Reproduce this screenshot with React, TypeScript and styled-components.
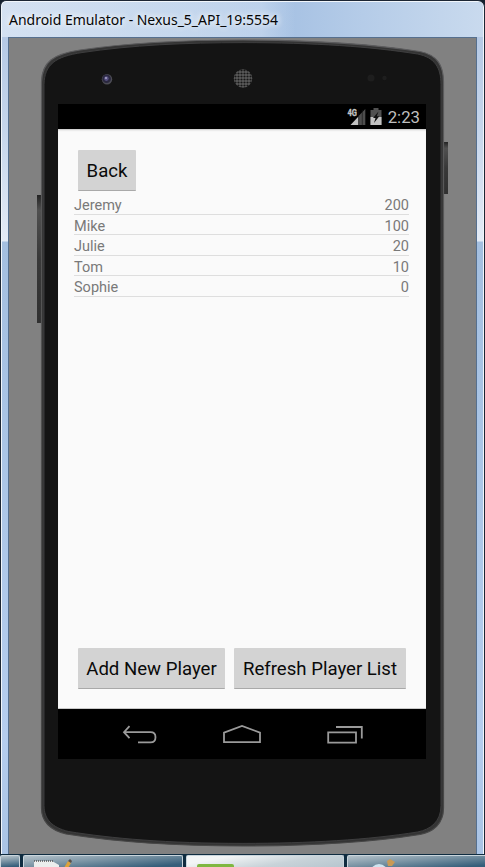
import React from 'react';
import styled, { createGlobalStyle } from 'styled-components';

const Global = createGlobalStyle`
  * { box-sizing: border-box; }
  body { margin: 0; background: #17202b; overflow: hidden; }
`;

const Desktop = styled.div`
  width: 485px;
  height: 867px;
  display: flex;
  flex-direction: column;
  overflow: hidden;
  background: #14202e;
`;

const Window = styled.div`
  height: 854px;
  border: 1px solid #1c2634;
  border-bottom: 0;
  border-radius: 6px 7px 0 0;
  display: flex;
  flex-direction: column;
  background: #bcd0e9;
  box-shadow: inset 1px 1px 0 #f1f6fb, inset -1px 0 0 #f1f6fb;
  flex: none;
`;

const TitleBar = styled.div`
  height: 35px;
  margin: 1px 1px 0;
  padding: 6px 0 0 7px;
  border-radius: 5px 5px 0 0;
  background:
    linear-gradient(90deg, rgba(225, 235, 247, 0.7) 0, rgba(215, 229, 245, 0.5) 54%, rgba(160, 190, 225, 0) 61%),
    linear-gradient(90deg, #b5cae5 0, #a3bfe2 55%, #b5cce8 75%, #c9daee 100%);
`;

const Title = styled.div`
  font: 14px/24px 'Noto Sans', 'Open Sans', sans-serif;
  letter-spacing: -0.02px;
  color: #060606;
  white-space: nowrap;
  text-shadow: 0 0 6px #fff, 0 0 8px rgba(255, 255, 255, 0.8);
`;

const WindowBody = styled.div`
  flex: 1;
  display: flex;
  padding: 0 7px 0 7px;
  background: linear-gradient(180deg, #b5c9e5 0, #c5d5eb 90px, #e4ebf6 204px, #a4bfe0 205px, #a9c4e5 380px, #b5cdee 700px, #a9c3e4 100%);
  margin: 0 1px;
`;

const Stage = styled.div`
  position: relative;
  flex: 1;
  margin: 0 -1px;
  border: 1px solid #56708f;
  border-bottom: 0;
  background: #818181;
  padding: 66px 0 0 49px;
`;

const Shell = styled.svg`
  position: absolute;
  left: -9px;
  top: -38px;
  width: 485px;
  height: 855px;
`;

const Screen = styled.div`
  position: relative;
  width: 368px;
  height: 655px;
  display: flex;
  flex-direction: column;
  background: #fafafa;
  font-family: Roboto, sans-serif;
`;

const StatusBar = styled.div`
  height: 25px;
  display: flex;
  align-items: center;
  justify-content: flex-end;
  gap: 3px;
  background: #000;
  padding: 0 6px 0 0;
  svg { flex: none; }
`;

const Clock = styled.span`
  font-size: 16.8px;
  line-height: 24px;
  color: #bfbfbf;
  margin-left: 3px;
`;

const Content = styled.div`
  flex: 1;
  display: flex;
  flex-direction: column;
  padding: 21px 16px 19px;
  border-bottom: 1px solid #c9c9c9;
  box-shadow: inset 0 2px 2px -1px #c4c4c4;
`;

const Button = styled.button<{ $w: number }>`
  width: ${(p) => p.$w}px;
  height: 41px;
  padding: 2px 0 0;
  border: 0;
  border-bottom: 1px solid #a9a9a9;
  border-radius: 1px;
  background: #d3d3d3;
  color: #0a0a0a;
  font: 18.6px/38px Roboto, sans-serif;
  white-space: nowrap;
`;

const TopActions = styled.div`
  display: flex;
  padding-left: 4px;
`;

const PlayerList = styled.ul`
  list-style: none;
  margin: 3px 0 0;
  padding: 0;
  width: 335px;
`;

const PlayerRow = styled.li`
  display: flex;
  justify-content: space-between;
  height: 20.5px;
  border-bottom: 1px solid #dedede;
  font-size: 14.5px;
  line-height: 23px;
  color: #797979;
`;

const BottomActions = styled.div`
  display: flex;
  gap: 9px;
  margin-top: auto;
  padding-left: 4px;
`;

const NavBar = styled.div`
  height: 50px;
  background: #000;
  display: flex;
  align-items: center;
  justify-content: space-between;
  padding: 2px 63px 0 63px;
`;

const NavIcon = styled.svg`
  display: block;
  fill: none;
  stroke: #9a9a9a;
  stroke-width: 1.8;
`;

const TaskBar = styled.div`
  flex: 1;
  display: flex;
  gap: 3px;
  padding-top: 1px;
  background: #0f2c40;
`;

const Task = styled.div<{ $w: number; $pad: number; $active?: boolean }>`
  width: ${(p) => p.$w}px;
  flex: none;
  padding-left: ${(p) => p.$pad}px;
  border: 1px solid #c9d5dc;
  border-bottom: 0;
  border-radius: 2px 2px 0 0;
  overflow: hidden;
  background: ${(p) =>
    p.$active
      ? 'linear-gradient(170deg, #f2f5f6 20%, #c8d3d9 60%, #b5c5ce)'
      : 'linear-gradient(175deg, #b5c2ca 0, #7c95a5 40%, #355e7a 85%)'};
  svg { display: block; }
`;

const players = [
  { name: 'Jeremy', score: 200 },
  { name: 'Mike', score: 100 },
  { name: 'Julie', score: 20 },
  { name: 'Tom', score: 10 },
  { name: 'Sophie', score: 0 },
];

const BODY =
  'M41.5 82 C42 62 53 54 80 50 C130 42.5 185 40 243 40 C315 40 373 44 420 51.5 C437 55 443.5 65 443.5 82 V808 C443.5 824 433 832 420 834.5 C370 842.5 310 846 243 846 C165 846 110 841 66 834 C50 830 41.5 822 41.5 808 Z';

function DeviceShell() {
  return (
    <Shell viewBox="0 0 485 855" aria-hidden="true">
      <defs>
        <linearGradient id="key" x1="0" y1="0" x2="0" y2="1">
          <stop offset="0" stopColor="#222" />
          <stop offset="0.12" stopColor="#505050" />
          <stop offset="0.5" stopColor="#383838" />
          <stop offset="1" stopColor="#303030" />
        </linearGradient>
        <linearGradient id="rim" x1="0" y1="0" x2="0" y2="1">
          <stop offset="0" stopColor="#5c5c5e" />
          <stop offset="0.3" stopColor="#555" />
          <stop offset="1" stopColor="#464646" />
        </linearGradient>
        <pattern id="mesh" width="3" height="3" patternUnits="userSpaceOnUse">
          <rect width="3" height="3" fill="#5c5c5c" />
          <circle cx="1.5" cy="1.5" r="1.1" fill="#181818" />
        </pattern>
      </defs>
      <rect x="37" y="195" width="5" height="128" fill="url(#key)" />
      <rect x="443" y="142" width="5" height="52" fill="url(#key)" />
      <path d={BODY} fill="#343434" stroke="url(#rim)" strokeWidth="1.2" />
      <path d={BODY} fill="#141414" stroke="#3e3e3f" strokeWidth="1" transform="translate(242.5 443) scale(.9875 .9935) translate(-242.5 -443)" />
      <circle cx="107" cy="79.3" r="5.2" fill="#4c4c54" />
      <circle cx="106.6" cy="78.8" r="4.3" fill="#2a283f" />
      <circle cx="106.4" cy="78.6" r="2.3" fill="#554f80" />
      <circle cx="106" cy="78" r="0.9" fill="#b3afd0" />
      <circle cx="243" cy="78.5" r="9.2" fill="url(#mesh)" />
      <circle cx="371" cy="78" r="3.5" fill="#1e1e1e" />
      <circle cx="384.5" cy="78" r="2.2" fill="#1e1e1e" />
    </Shell>
  );
}

const SignalIcon = () => (
  <svg width="20" height="20" viewBox="0 0 20 20">
    <path d="M18.3 2 V18 H11.5 V9Z" fill="#4d4d4d" />
    <path d="M11.5 9.5 V18 H3.5Z" fill="#c2c2c2" />
    <path d="M11.7 3V18M15.3 3V18" stroke="#151515" strokeWidth="0.6" />
    <text x="0.5" y="9" fontFamily="Roboto, sans-serif" fontSize="9" fontWeight="700" fill="#c5c5c5" stroke="#c5c5c5" strokeWidth=".3" textLength="9.5" lengthAdjust="spacingAndGlyphs">4G</text>
  </svg>
);

const BatteryIcon = () => (
  <svg width="12" height="20" viewBox="0 0 12 20">
    <path d="M3.5 1H8.5V3H11.5V18H.5V3H3.5Z" fill="#515151" />
    <path d="M.5 10H11.5V18H.5Z" fill="#c2c2c2" />
    <path d="M8.5 4.5 3 11H5.5L4 16 9.3 9.3H6.8Z" fill="#111" />
  </svg>
);

export default function App() {
  return (
    <>
      <Global />
      <Desktop>
        <Window>
          <TitleBar>
            <Title>Android Emulator - Nexus_5_API_19:5554</Title>
          </TitleBar>
          <WindowBody>
            <Stage>
              <DeviceShell />
              <Screen>
                <StatusBar>
                  <SignalIcon />
                  <BatteryIcon />
                  <Clock>2:23</Clock>
                </StatusBar>
                <Content>
                  <TopActions>
                    <Button $w={58}>Back</Button>
                  </TopActions>
                  <PlayerList>
                    {players.map((p) => (
                      <PlayerRow key={p.name}>
                        <span>{p.name}</span>
                        <span>{p.score}</span>
                      </PlayerRow>
                    ))}
                  </PlayerList>
                  <BottomActions>
                    <Button $w={147}>Add New Player</Button>
                    <Button $w={172}>Refresh Player List</Button>
                  </BottomActions>
                </Content>
                <NavBar>
                  <NavIcon width="36" height="20" viewBox="0 0 36 20">
                    <path d="M8.5 1.2 3 7.2 8.5 13.2M3 7.2H29.5C33 7.2 34.5 9.4 34.5 12.2S33 17.4 29.5 17.4H17" />
                  </NavIcon>
                  <NavIcon width="38" height="20" viewBox="0 0 38 20">
                    <path d="M1 17.2V7.6L19 1 37 7.6V17.2Z" />
                  </NavIcon>
                  <NavIcon width="36" height="20" viewBox="0 0 36 20">
                    <path d="M1.2 7.3H29V17.6H1.2ZM9 2H34.8V13.5" />
                  </NavIcon>
                </NavBar>
              </Screen>
            </Stage>
          </WindowBody>
        </Window>
        <TaskBar>
          <Task $w={20} $pad={0} />
          <Task $w={160} $pad={10}>
            <svg width="50" height="12" viewBox="0 0 50 12">
              <path d="M0 5H18L25 9V12H0Z" fill="#eceeed" />
              <path d="M0 5H19" stroke="#555" strokeWidth="1.5" strokeDasharray="1 1" />
              <path d="M30 12 34 5 37 7 34 12Z" fill="#dda23a" />
              <path d="M34 5 36 3 38 5 37 7Z" fill="#58504b" />
            </svg>
          </Task>
          <Task $w={158} $pad={10} $active>
            <svg width="40" height="12" viewBox="0 0 40 12">
              <rect x="0" y="8" width="37" height="8" rx="2" fill="#7fb741" />
            </svg>
          </Task>
          <Task $w={150} $pad={20}>
            <svg width="40" height="12" viewBox="0 0 40 12">
              <circle cx="11" cy="17" r="9" fill="#cfe4f0" />
              <path d="M19 5 22 3 27 6 24 10H20Z" fill="#c99a55" />
            </svg>
          </Task>
        </TaskBar>
      </Desktop>
    </>
  );
}
